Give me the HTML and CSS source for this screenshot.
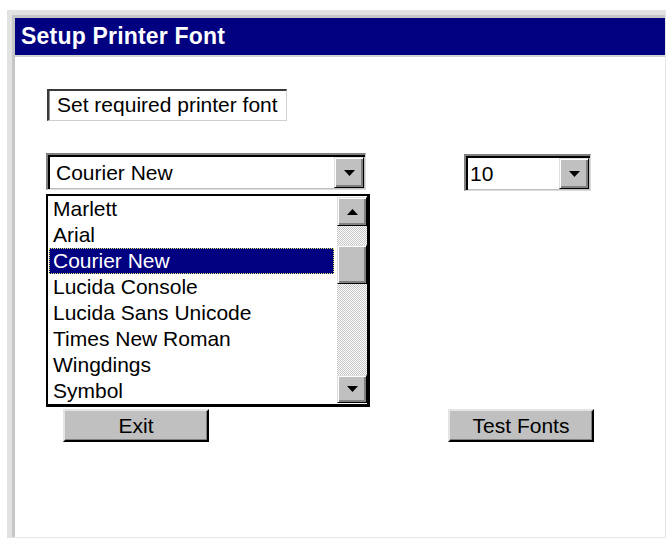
FILE: index.html
```html
<!DOCTYPE html>
<html>
<head>
<meta charset="utf-8">
<title>Setup Printer Font</title>
<link rel="stylesheet" href="styles.css">
</head>
<body>
<div class="window">
  <div class="frame">
    <div class="titlebar">Setup Printer Font</div>
    <div class="client">
      <div class="label">Set required printer font</div>

      <div class="combo-row">
        <div class="font-col">
          <div class="combo combo-font">
            <span class="combo-text">Courier New</span>
            <span class="raised drop-btn">
              <svg width="11" height="6" viewBox="0 0 11 6"><polygon points="0,0 11,0 5.5,6" fill="#000"/></svg>
            </span>
          </div>
          <div class="dropdown">
            <ul class="items">
              <li>Marlett</li>
              <li>Arial</li>
              <li class="selected">Courier New</li>
              <li>Lucida Console</li>
              <li>Lucida Sans Unicode</li>
              <li>Times New Roman</li>
              <li>Wingdings</li>
              <li>Symbol</li>
            </ul>
            <div class="scrollbar">
              <span class="raised scroll-btn up">
                <svg width="11" height="6" viewBox="0 0 11 6"><polygon points="0,6 11,6 5.5,0" fill="#000"/></svg>
              </span>
              <div class="track">
                <span class="raised thumb"></span>
              </div>
              <span class="raised scroll-btn down">
                <svg width="11" height="6" viewBox="0 0 11 6"><polygon points="0,0 11,0 5.5,6" fill="#000"/></svg>
              </span>
            </div>
          </div>
        </div>

        <div class="combo combo-size">
          <span class="combo-text size-text">10</span>
          <span class="raised drop-btn">
            <svg width="11" height="6" viewBox="0 0 11 6"><polygon points="0,0 11,0 5.5,6" fill="#000"/></svg>
          </span>
        </div>
      </div>

      <div class="button-row">
        <button class="push exit">Exit</button>
        <button class="push test">Test Fonts</button>
      </div>
    </div>
  </div>
</div>
</body>
</html>
```

FILE: styles.css
```css
html, body {
  margin: 0;
  padding: 0;
  background: #fff;
}

body {
  width: 666px;
  height: 538px;
  overflow: hidden;
  font-family: "Liberation Sans", Arial, sans-serif;
  font-size: 21px;
  color: #000;
}

/* outer dialog frame */
.window {
  box-sizing: border-box;
  margin: 10px 0 0 7px;
  width: 659px;
  height: 528px;
  border-left: 5px solid #e2e2e2;
  border-top: 5px solid #e2e2e2;
  border-right: 1px solid #e6e6e6;
  border-bottom: 1px solid #e6e6e6;
}

.frame {
  box-sizing: border-box;
  height: 100%;
  border-left: 3px solid #c6c6c6;
  border-top: 3px solid #c6c6c6;
  display: flex;
  flex-direction: column;
}

.titlebar {
  height: 37px;
  line-height: 37px;
  background: #000080;
  color: #fff;
  font-weight: bold;
  font-size: 23px;
  padding-left: 6px;
  letter-spacing: 0.2px;
  white-space: nowrap;
}

.client {
  flex: 1;
  border-top: 2px solid #d2d2d2;
  padding: 32px 0 0 31px;
}

/* sunken caption box */
.label {
  box-sizing: border-box;
  margin-left: 1px;
  width: 240px;
  height: 32px;
  line-height: 28px;
  padding-left: 8px;
  border-style: solid;
  border-width: 2px 1px 1px 2px;
  border-color: #3a3a3a #cfcfcf #cfcfcf #3a3a3a;
  box-shadow: inset 1px 0 0 #909090;
  white-space: nowrap;
}

.combo-row {
  display: flex;
  align-items: flex-start;
  margin-top: 32px;
}

.font-col {
  width: 324px;
}

/* combo boxes */
.combo {
  box-sizing: border-box;
  height: 37px;
  display: flex;
  align-items: stretch;
  border-style: solid;
  border-width: 2px 1px 1px 2px;
  border-color: #808080 #dcdcdc #dcdcdc #808080;
  box-shadow: inset 2px 2px 0 #000, inset -1px -1px 0 #c0c0c0;
  padding: 2px 1px 1px 2px;
  background: #fff;
}

.combo-font {
  width: 320px;
}

.combo-size {
  width: 127px;
  margin-left: 94px;
  margin-top: 1px;
}

.combo-text {
  flex: 1;
  line-height: 31px;
  padding-left: 6px;
  white-space: nowrap;
}

.size-text {
  padding-left: 2px;
}

/* raised 3D button face */
.raised {
  box-sizing: border-box;
  background: #c0c0c0;
  border: 1px solid;
  border-color: #dfdfdf #000 #000 #dfdfdf;
  box-shadow: inset 1px 1px 0 #fff, inset -2px -2px 0 #808080;
  display: flex;
  align-items: center;
  justify-content: center;
}

.drop-btn {
  width: 30px;
  height: 31px;
}

.drop-btn svg,
.scroll-btn svg {
  display: block;
}

/* dropped-down list */
.dropdown {
  box-sizing: border-box;
  margin-top: 4px;
  width: 324px;
  height: 213px;
  border-style: solid;
  border-color: #000;
  border-width: 2px 3px 3px 2px;
  display: flex;
  background: #fff;
}

.items {
  list-style: none;
  margin: 0;
  padding: 0;
  flex: 1;
}

.items li {
  height: 26px;
  line-height: 26px;
  padding-left: 5px;
  white-space: nowrap;
}

.items li.selected {
  box-sizing: border-box;
  margin: 0 3px 0 1px;
  padding-left: 4px;
  background: #000080;
  color: #fff;
  outline: 1px dotted #e8e860;
  outline-offset: -1px;
}

.scrollbar {
  width: 30px;
  display: flex;
  flex-direction: column;
  padding: 1px 0 1px;
  box-sizing: border-box;
}

.scroll-btn {
  width: 30px;
  height: 28px;
  flex: none;
}

.scroll-btn.up {
  height: 29px;
}

.track {
  flex: 1;
  background: repeating-conic-gradient(#c4c4c4 0 25%, #ffffff 0 50%) 0 0 / 2px 2px;
  display: flex;
  flex-direction: column;
}

.thumb {
  margin-top: 19px;
  width: 30px;
  height: 39px;
}

/* push buttons */
.button-row {
  display: flex;
  margin-top: 2px;
}

.push {
  box-sizing: border-box;
  width: 146px;
  height: 33px;
  padding: 0;
  font-family: "Liberation Sans", Arial, sans-serif;
  font-size: 21px;
  color: #000;
  background: #c0c0c0;
  border-style: solid;
  border-width: 2px;
  border-color: #e4e4e4 #000 #000 #e4e4e4;
  box-shadow: inset -1px -1px 0 #808080;
  line-height: 29px;
}

.exit {
  margin-left: 17px;
}

.test {
  margin-left: 239px;
}
```
